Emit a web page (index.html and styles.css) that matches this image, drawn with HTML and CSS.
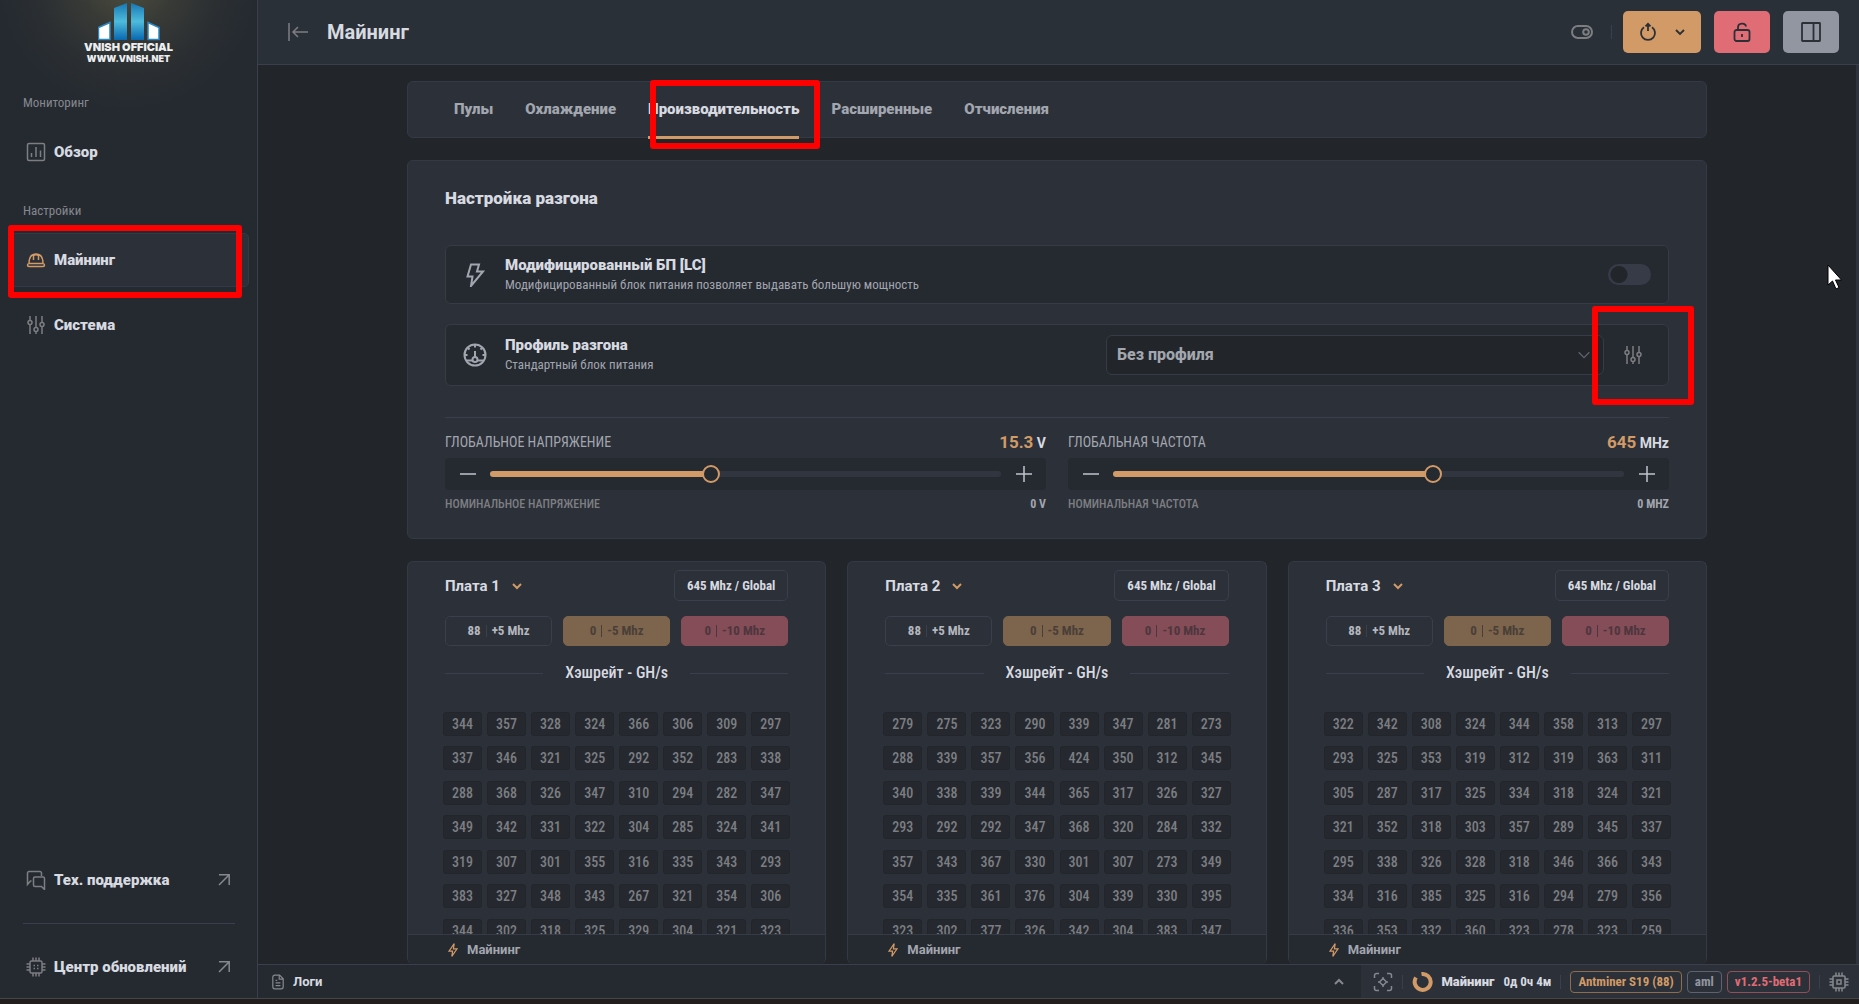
FILE: index.html
```html
<!DOCTYPE html>
<html lang="ru">
<head>
<meta charset="utf-8">
<title>Майнинг</title>
<link rel="stylesheet" href="styles.css">
</head>
<body>
<svg class="sprite" aria-hidden="true">
  <symbol id="chev" viewBox="0 0 12 12"><path d="M2 4l4 4 4-4"/></symbol>
  <symbol id="sliders" viewBox="0 0 20 20"><path d="M4 1v4.500M4 9.500V19M10 1v11.500M10 16.500V19M16 1v6.500M16 11.500V19"/><circle cx="4" cy="7.500" r="2"/><circle cx="10" cy="14.500" r="2"/><circle cx="16" cy="9.500" r="2"/></symbol>
  <symbol id="arrow" viewBox="0 0 14 14"><path d="M2 12L12 2M2 1.800h10.200V12"/></symbol>
  <symbol id="chip" viewBox="0 0 20 20"><rect x="4" y="4" width="12" height="12" rx="1.500"/><path d="M7 .5V4M10 .5V4M13 .5V4M7 16v3.500M10 16v3.500M13 16v3.500M.5 7H4M.5 10H4M.5 13H4M16 7h3.500M16 10h3.500M16 13h3.500M7.500 8.500h1.500M11 8.500h1.500M7.500 11.500h1.500M11 11.500h1.500"/></symbol>
  <symbol id="cpu" viewBox="0 0 20 20"><rect x="4" y="4" width="12" height="12" rx="1"/><rect x="8" y="8" width="4" height="4"/><path d="M7 .5V4M10 .5V4M13 .5V4M7 16v3.500M10 16v3.500M13 16v3.500M.5 7H4M.5 10H4M.5 13H4M16 7h3.500M16 10h3.500M16 13h3.500"/></symbol>
  <symbol id="bolt" viewBox="0 0 20 20"><path d="M11.500 2L5 11.500h4.500L8.500 18 15 8.500h-4.500z"/></symbol>
</svg>
<div class="app">
  <aside class="sidebar">
    <div class="brand">
      <svg class="brand-mark" viewBox="0 0 62 38" aria-hidden="true">
        <defs><linearGradient id="sky" x1="0" y1="0" x2="0" y2="1"><stop offset="0" stop-color="#1677b4"/><stop offset=".5" stop-color="#4fbbdc"/><stop offset="1" stop-color="#0768b0"/></linearGradient></defs>
        <path fill="url(#sky)" d="M16 5l13-5v37H16zM33 0l13 5v32H33z"/>
        <path fill="#fff" stroke="#2a87c4" d="M.5 24.500L12 19.500v17H.5zM50 19.500l11 5v12H50z"/>
      </svg>
      <strong>VNISH OFFICIAL</strong>
      <span>WWW.VNISH.NET</span>
    </div>
    <nav class="menu">
      <p class="menu-label">Мониторинг</p>
      <a class="item" href="#"><svg class="ic" viewBox="0 0 20 20"><rect x="1.500" y="1.500" width="17" height="17" rx="1.500"/><path d="M5.500 11v4M10 5v10M14.500 8.500V15"/></svg>Обзор</a>
      <p class="menu-label second">Настройки</p>
      <a class="item active" href="#"><svg class="ic" viewBox="0 0 20 20"><path d="M3 13.500C3 7 6 4 10 4s7 3 7 9.500M7.500 5v5M12.500 5v5M7.500 5.500L10 4.500l2.500 1M1.500 15.300c0-1 .5-1.800 1.500-1.800h14c1 0 1.500.8 1.500 1.800s-.7 1.200-1.500 1.200H3c-.8 0-1.500-.2-1.500-1.200z"/></svg>Майнинг</a>
      <a class="item" href="#"><svg class="ic"><use href="#sliders"/></svg>Система</a>
    </nav>
    <nav class="menu bottom">
      <a class="item" href="#"><svg class="ic" viewBox="0 0 20 20"><path d="M5.500 11H4.500L1.500 14.500V3a1.500 1.500 0 0 1 1.500-1.500h11A1.500 1.500 0 0 1 15.500 3v3M18.500 19.500l-3-3H9A1.500 1.500 0 0 1 7.500 15V8.500A1.500 1.500 0 0 1 9 7h8a1.500 1.500 0 0 1 1.500 1.500z"/></svg>Тех. поддержка<svg class="go"><use href="#arrow"/></svg></a>
      <hr>
      <a class="item" href="#"><svg class="ic"><use href="#chip"/></svg>Центр обновлений<svg class="go"><use href="#arrow"/></svg></a>
    </nav>
    <div class="callout c-menu"></div>
  </aside>

  <div class="main">
    <header class="top">
      <button class="plain" aria-label="Свернуть меню"><svg class="ic" viewBox="0 0 20 20"><path d="M1 1v18M20 10H5M10 5l-5 5 5 5"/></svg></button>
      <h1>Майнинг</h1>
      <button class="plain" aria-label="Режим"><svg class="pill" viewBox="0 0 22 14"><rect x="1" y="1" width="20" height="12" rx="6"/><circle cx="15" cy="7" r="2.800"/></svg></button>
      <i class="sep"></i>
      <button class="btn orange" aria-label="Перезапуск"><svg class="ic" viewBox="0 0 20 20"><path d="M6 5.200a7 7 0 1 0 8 0M10 9V2M7.500 4.300L10 1.800l2.500 2.500"/></svg><svg class="chev"><use href="#chev"/></svg></button>
      <button class="btn red" aria-label="Блокировка"><svg class="ic" viewBox="0 0 20 20"><rect x="2.500" y="8" width="15" height="11" rx="2"/><path d="M6 8V5.500c0-5 7.500-5 8-1M10 12v3"/></svg></button>
      <button class="btn grey" aria-label="Панель"><svg class="ic" viewBox="0 0 20 20"><rect x="1" y="1" width="18" height="18" rx=".5"/><path d="M12.500 1v18"/></svg></button>
    </header>

    <main class="scroll">
      <div class="content">
        <nav class="tabs card">
          <a href="#">Пулы</a><a href="#">Охлаждение</a><a href="#" class="on">Производительность</a><a href="#">Расширенные</a><a href="#">Отчисления</a>
          <div class="callout c-tab"></div>
        </nav>

        <section class="card tune">
          <h2>Настройка разгона</h2>
          <label class="row">
            <svg class="row-ic" viewBox="0 0 24 24"><path d="M8 1.500h8l-2 7h6L8 23l1.500-9.500H4.500z"/></svg>
            <span class="txt"><b>Модифицированный БП [LC]</b><small>Модифицированный блок питания позволяет выдавать большую мощность</small></span>
            <input type="checkbox" class="toggle">
          </label>
          <div class="row tall">
            <svg class="row-ic" viewBox="0 0 24 24"><circle cx="12" cy="12" r="10.500"/><path d="M12 8v6M3 17.500h6.500M14.500 17.500H21M12 2v2.500M2 12h2.500M19.500 12H22M5 5l1.500 1.500M19 5l-1.500 1.500"/><circle cx="12" cy="16.500" r="2.500"/></svg>
            <label class="txt" for="profile"><b>Профиль разгона</b><small>Стандартный блок питания</small></label>
            <span class="select"><select id="profile"><option>Без профиля</option></select><svg class="chev"><use href="#chev"/></svg></span>
            <button class="plain" aria-label="Настроить профиль"><svg class="ic"><use href="#sliders"/></svg></button>
            <div class="callout c-tune"></div>
          </div>
          <hr>
          <div class="globals">
            <div class="global">
              <p class="head"><label for="volt">Глобальное напряжение</label><span><em>15.3</em> V</span></p>
              <div class="bar"><button aria-label="Меньше"><svg class="ic" viewBox="0 0 20 20"><path d="M2 10h16"/></svg></button><input id="volt" type="range" min="0" max="1000" value="431" style="--v:43%"><button aria-label="Больше"><svg class="ic" viewBox="0 0 20 20"><path d="M2 10h16M10 2v16"/></svg></button></div>
              <p class="nom"><span>Номинальное напряжение</span><b>0 V</b></p>
            </div>
            <div class="global">
              <p class="head"><label for="freq">Глобальная частота</label><span><em>645</em> MHz</span></p>
              <div class="bar"><button aria-label="Меньше"><svg class="ic" viewBox="0 0 20 20"><path d="M2 10h16"/></svg></button><input id="freq" type="range" min="0" max="1000" value="631" style="--v:63%"><button aria-label="Больше"><svg class="ic" viewBox="0 0 20 20"><path d="M2 10h16M10 2v16"/></svg></button></div>
              <p class="nom"><span>Номинальная частота</span><b>0 MHz</b></p>
            </div>
          </div>
        </section>

        <div class="boards" id="boards"></div>
      </div>
    </main>

    <footer class="status">
      <button class="logs"><svg class="ic" viewBox="0 0 20 20"><path d="M12 1.500H6a2.500 2.500 0 0 0-2.500 2.500v12A2.500 2.500 0 0 0 6 18.500h8a2.500 2.500 0 0 0 2.500-2.500V6zM11.500 2v4.500H16M7 8h2M7 11h6M7 14.500h6"/></svg>Логи<svg class="chev up"><use href="#chev"/></svg></button>
      <div class="info">
        <svg class="ic" viewBox="0 0 20 20"><path d="M1.500 6V3.500a2 2 0 0 1 2-2H6M14 1.500h2.500a2 2 0 0 1 2 2V6M18.500 14v2.500a2 2 0 0 1-2 2H14M6 18.500H3.500a2 2 0 0 1-2-2V14M10 6.500l3.500 3.500-3.500 3.500L6.500 10zM10 5v1.500M10 13.500V15M5 10h1.500M13.500 10H15"/></svg>
        <i class="sep"></i>
        <svg class="donut" viewBox="0 0 22 22"><path d="M9.500 3A8 8 0 1 1 4 6.500"/></svg>
        <b class="state">Майнинг</b><b class="up-time">0д 0ч 4м</b>
        <i class="sep"></i>
        <span class="tags"><span class="tag o">Antminer S19 (88)</span><span class="tag">aml</span><span class="tag r">v1.2.5-beta1</span></span>
        <i class="sep"></i>
        <svg class="ic"><use href="#cpu"/></svg>
      </div>
    </footer>
  </div>
</div>
<div class="desk"></div>
<svg class="cursor" viewBox="0 0 15 26" aria-hidden="true"><path d="M1 1v20l4.500-4 3.500 8 3-1.500-3.500-7.500h6z"/></svg>
<script src="boards.js"></script>
</body>
</html>
```
FILE: boards.js
```js
const boards = [
  "344 357 328 324 366 306 309 297 337 346 321 325 292 352 283 338 288 368 326 347 310 294 282 347 349 342 331 322 304 285 324 341 319 307 301 355 316 335 343 293 383 327 348 343 267 321 354 306 344 302 318 325 329 304 321 323",
  "279 275 323 290 339 347 281 273 288 339 357 356 424 350 312 345 340 338 339 344 365 317 326 327 293 292 292 347 368 320 284 332 357 343 367 330 301 307 273 349 354 335 361 376 304 339 330 395 323 302 377 326 342 304 383 347",
  "322 342 308 324 344 358 313 297 293 325 353 319 312 319 363 311 305 287 317 325 334 318 324 321 321 352 318 303 357 289 345 337 295 338 326 328 318 346 366 343 334 316 385 325 316 294 279 356 336 353 332 360 323 278 323 259"
];
document.getElementById("boards").innerHTML = boards.map((chips, i) => `
  <section class="card board">
    <div class="board-body">
      <div class="board-head"><button class="name">Плата ${i + 1}<svg class="chev"><use href="#chev"/></svg></button><button class="freq">645 Mhz / Global</button></div>
      <div class="steps">
        <button class="step">88<i></i>+5 Mhz</button>
        <button class="step o" disabled>0<i></i>-5 Mhz</button>
        <button class="step r" disabled>0<i></i>-10 Mhz</button>
      </div>
      <h3>Хэшрейт - GH/s</h3>
      <div class="chips">${chips.split(" ").map(c => `<span>${c}</span>`).join("")}</div>
    </div>
    <div class="board-foot"><svg class="bolt"><use href="#bolt"/></svg>Майнинг</div>
  </section>`).join("");
```
FILE: styles.css
```css
:root { --narrow: "Roboto Condensed", Roboto, "Liberation Sans", sans-serif; }
* { box-sizing: border-box; }
body { margin: 0; height: 100vh; display: flex; flex-direction: column; overflow: hidden; background: #222529; color: #d7dae0; font: 14px/20px Roboto, "Liberation Sans", sans-serif; }
button, input, select { font: inherit; color: inherit; margin: 0; }
button { border: 0; background: none; padding: 0; }
h1, h2, h3, p { margin: 0; }
a { color: inherit; text-decoration: none; }
hr { border: 0; border-top: 1px solid #3a3f4b; margin: 0; }
svg { fill: none; stroke: currentColor; stroke-width: 1.500; flex: none; }
.sprite { position: absolute; width: 0; height: 0; }
.ic { width: 20px; height: 20px; display: block; }
.chev { width: 12px; height: 12px; stroke-width: 2; }
.plain { color: #7c7e82; }
.sep { width: 1px; height: 14px; background: #3a3f4b; }
.card { background: #2c3038; border: 1px solid #343946; border-radius: 6px; }
.callout { position: absolute; border: 6px solid #f00; border-radius: 3px; pointer-events: none; z-index: 2; }

.app { flex: 1; min-height: 0; display: flex; border-bottom: 1px solid #45464a; }
.desk { height: 5px; background: #221e1d; }

.sidebar { position: relative; width: 258px; display: flex; flex-direction: column; background: radial-gradient(circle at 128px -20px, #50503f 0, #383a36 48px, #2b2f32 90px, #252a31 130px); border-right: 1px solid #3a3f4b; }
.brand { height: 91px; padding-top: 3px; display: flex; flex-direction: column; align-items: center; font: 900 9px/11px Inter, sans-serif; color: #eceef0; }
.brand-mark { width: 62px; height: 38px; stroke: none; margin-bottom: 1px; }
.brand strong { font-weight: 900; font-size: 11px; }
.menu { display: flex; flex-direction: column; padding: 0 8px; }
.menu-label { padding: 2px 15px; font: 13px/20px var(--narrow); color: #85888e; height: 34px; }
.menu-label.second { margin-top: 11px; height: 32px; padding-top: 0; }
.item { height: 54px; margin-bottom: 11px; padding: 0 17px; display: flex; align-items: center; gap: 8px; font-size: 15px; font-weight: 900; border: 1px solid transparent; border-radius: 5px; }
.item .ic { color: #7c7e82; }
.item.active { background: #2c3038; border-color: #343946; }
.item.active .ic { color: #d19a66; }
.go { width: 14px; height: 14px; margin-left: auto; color: #85888e; }
.bottom { margin-top: auto; }
.bottom .item { margin: 0 0 16px; }
.bottom .item:last-child { margin: 16px 0 4px; }
.bottom hr { margin: 0 14px 0 15px; }
.c-menu { left: 8px; top: 225px; width: 234px; height: 73px; }

.main { flex: 1; min-width: 0; display: flex; flex-direction: column; }
.top { height: 65px; padding: 0 20px 0 30px; display: flex; align-items: center; background: #2a3037; border-bottom: 1px solid #3a3f4b; }
h1 { margin-left: 19px; margin-right: auto; font-size: 20px; line-height: 24px; font-weight: 700; }
.pill { width: 22px; height: 14px; display: block; stroke-width: 2; }
.top .sep { margin: 0 11px 0 18px; }
.btn { width: 56px; height: 42px; border-radius: 5px; color: #2b2f36; display: flex; align-items: center; justify-content: center; margin-left: 13px; }
.btn svg { stroke-width: 1.800; }
.btn.orange { width: 78px; margin-left: 0; gap: 16px; background: #d19a66; }
.btn.red { background: #e06c75; }
.btn.grey { background: #9296a0; }

.scroll { flex: 1; min-height: 0; overflow: hidden; padding: 16px 0 0; border-right: 3px solid #2f333b; }
.content { max-width: 1300px; height: 100%; margin: 0 auto; display: flex; flex-direction: column; gap: 22px; }
.tabs { position: relative; flex: none; height: 57px; padding: 0 46px; display: flex; gap: 32px; font-size: 15px; font-weight: 900; color: #a2a6af; }
.tabs a { line-height: 54px; height: 57px; }
.tabs .on { color: #d7dae0; border-bottom: 3px solid #d19a66; }
.c-tab { left: 242px; top: -2px; width: 170px; height: 69px; }
.tune { flex: none; padding: 24px 37px 20px; }
h2 { font-size: 17px; line-height: 26px; font-weight: 900; }
.row { position: relative; height: 59px; margin-top: 34px; padding: 0 17px; display: flex; align-items: center; background: #252930; border: 1px solid #363b45; border-radius: 6px; }
.row.tall { height: 62px; margin-top: 20px; padding-right: 25px; }
.row-ic { width: 24px; height: 24px; color: #a2a6af; stroke-width: 2; }
.txt { margin-left: 18px; display: flex; flex-direction: column; flex: 1; }
.txt b { font-size: 15px; line-height: 20px; font-weight: 900; }
.txt small { font: 13px/20px var(--narrow); color: #a2a6af; }
.toggle { appearance: none; width: 43px; height: 21px; border-radius: 11px; background: radial-gradient(circle at 11px 50%, #222529 8px, #363b47 9px); }
.select { position: relative; width: 498px; height: 40px; margin-right: 19px; }
.select select { width: 100%; height: 100%; appearance: none; background: #222529; border: 1px solid #363b45; border-radius: 6px; padding: 0 10px; font-size: 16px; font-weight: 800; color: #a2a6af; }
.select .chev { position: absolute; right: 12px; top: 12px; width: 16px; height: 16px; stroke-width: 1; color: #5d626e; }
.c-tune { right: -26px; top: -19px; width: 102px; height: 99px; }
.tune hr { margin-top: 31px; }
.globals { display: grid; grid-template-columns: 1fr 1fr; gap: 22px; padding-top: 10px; }
.head, .nom { display: flex; justify-content: space-between; align-items: center; text-transform: uppercase; }
.head { height: 28px; margin-bottom: 2px; color: #a2a6af; }
.head label { font: 14px/20px var(--narrow); }
.head span { text-transform: none; font-weight: 700; color: #d7dae0; }
.head em { font-style: normal; font-size: 17px; color: #d19a66; }
.bar { height: 32px; display: flex; align-items: center; background: #252930; border-radius: 4px; }
.bar button { width: 45px; display: flex; justify-content: center; color: #c0c4cc; }
.bar input { flex: 1; min-width: 0; appearance: none; height: 6px; border-radius: 3px; background: linear-gradient(to right, #d19a66 var(--v), #31353f var(--v)); }
.bar input::-webkit-slider-thumb { appearance: none; width: 18px; height: 18px; border: 2px solid #d19a66; border-radius: 50%; background: #252930; }
.nom { height: 28px; font: 500 12px/20px var(--narrow); color: #7c7e82; }
.nom b { color: #a2a6af; }

.boards { flex: 1; min-height: 0; display: grid; grid-template-columns: repeat(3, 1fr); gap: 21px; }
.board { min-height: 0; display: flex; flex-direction: column; border-bottom: 0; overflow: hidden; }
.board-body { flex: 1; min-height: 0; overflow: hidden; padding: 8px 37px 0; }
.board-head { display: flex; justify-content: space-between; height: 31px; }
.name { display: flex; align-items: center; gap: 11px; font-size: 15px; font-weight: 700; }
.name .chev { color: #d19a66; }
.freq, .step { border: 1px solid #3a3f4b; border-radius: 5px; font: 700 13px/20px var(--narrow); }
.freq { padding: 0 12px; }
.steps { display: grid; grid-template-columns: repeat(3, 1fr); gap: 11px; margin-top: 15px; }
.step { height: 30px; display: flex; align-items: center; justify-content: center; gap: 5px; color: #b4b7be; }
.step i { width: 1px; height: 12px; background: #3a3f4b; }
.step.o { background: #7d644c; border-color: #7d644c; color: #493f38; }
.step.r { background: #844d57; border-color: #844d57; color: #4d363e; }
.step:disabled i { background: currentColor; }
h3 { display: flex; align-items: center; gap: 22px; margin-top: 17px; font: 500 16px/20px var(--narrow); }
h3::before, h3::after { content: ""; flex: 1; height: 1px; background: #3a3f4b; }
.chips { display: grid; grid-template-columns: repeat(8, 39px); grid-auto-rows: 34px 35px; justify-content: space-between; margin: 29px -2px 0; }
.chips span { height: 24px; background: #25292f; border: 1px solid #22262b; border-radius: 3px; text-align: center; font: 500 14px/22px var(--narrow); color: #7c7e82; }
.board-foot { height: 30px; padding: 0 37px; display: flex; align-items: center; gap: 6px; background: #252930; border-top: 1px solid #363b45; font-size: 13px; font-weight: 700; color: #a2a6af; }
.bolt { width: 16px; height: 16px; color: #d19a66; }

.status { height: 34px; display: flex; border-top: 1px solid #3a3f4b; font-size: 13px; font-weight: 700; }
.logs { flex: 1; display: flex; align-items: center; gap: 7px; padding: 0 16px 0 12px; background: #252a31; }
.logs .ic { width: 16px; height: 16px; color: #85888e; }
.up { margin-left: auto; transform: rotate(180deg); color: #85888e; }
.info { display: flex; align-items: center; padding: 0 10px 0 12px; background: #2c3038; color: #d7dae0; }
.info .ic { color: #85888e; width: 20px; height: 20px; }
.info .sep { margin: 0 9px; }
.donut { width: 22px; height: 22px; stroke: #d19a66; stroke-width: 4; }
.state { margin: 0 9px 0 7px; }
.up-time { font: 700 13px/20px var(--narrow); }
.tags { display: flex; gap: 5px; }
.tag { height: 22px; padding: 0 7px; border: 1px solid #5d626e; border-radius: 4px; font: 700 13px/20px var(--narrow); color: #9296a0; }
.tag.o { color: #d19a66; border-color: #8c6d50; }
.tag.r { color: #e06c75; border-color: #8f505a; }
.cursor { position: absolute; left: 1827px; top: 264px; width: 15px; height: 26px; fill: #fff; stroke: #000; stroke-width: 1; }
```
